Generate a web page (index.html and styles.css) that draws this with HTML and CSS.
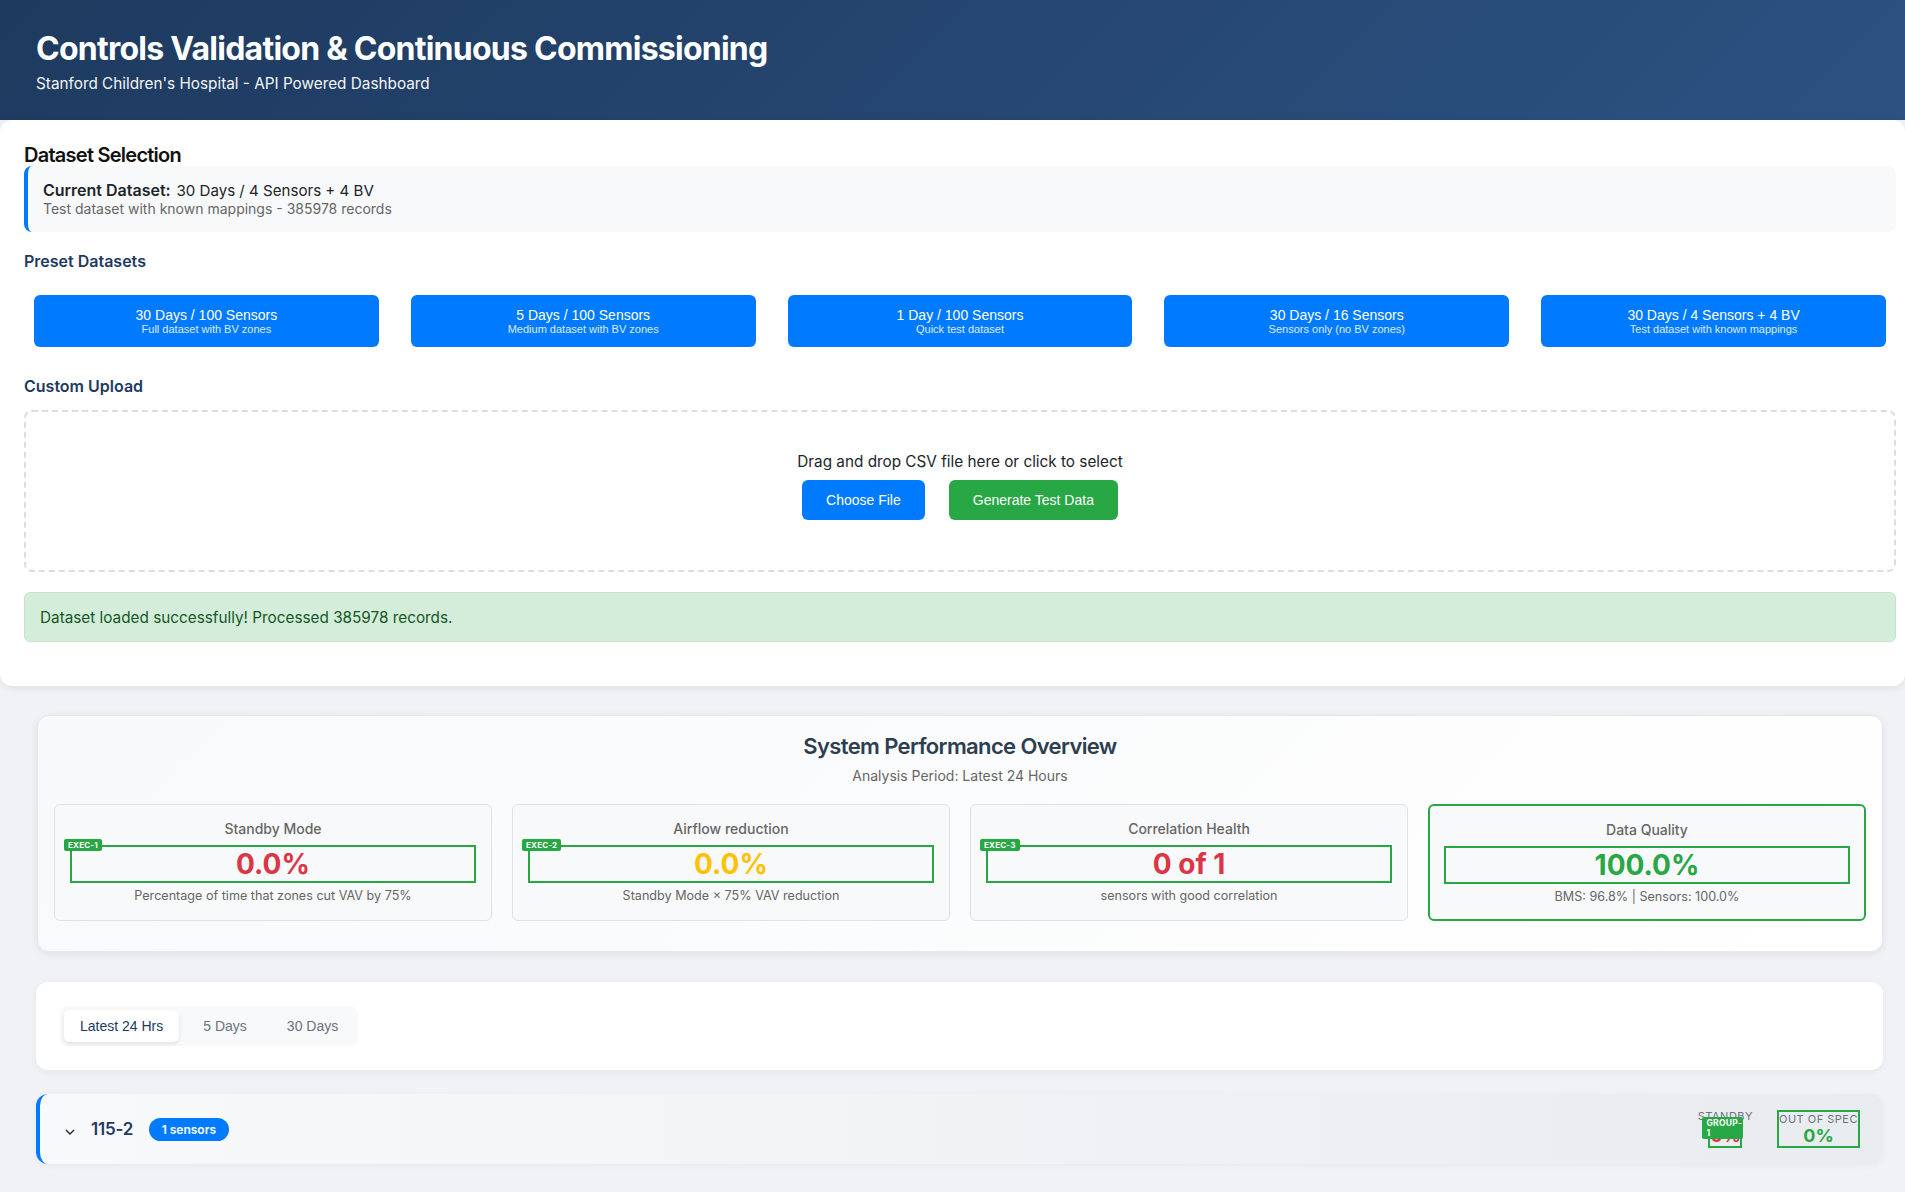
FILE: index.html
```html
<!DOCTYPE html>
<html lang="en">
<head>
<meta charset="utf-8">
<title>Controls Validation &amp; Continuous Commissioning</title>
<link rel="stylesheet" href="styles.css">
</head>
<body>
<header class="hero">
  <h1>Controls Validation &amp; Continuous Commissioning</h1>
  <p>Stanford Children's Hospital - API Powered Dashboard</p>
</header>
<section class="dataset">
  <h2>Dataset Selection</h2>
  <div class="current">
    <div class="current-name"><strong>Current Dataset:</strong> 30 Days / 4 Sensors + 4 BV</div>
    <div class="current-desc">Test dataset with known mappings - 385978 records</div>
  </div>
  <h3 class="label preset-label">Preset Datasets</h3>
  <div class="presets">
    <button class="preset"><span class="preset-name">30 Days / 100 Sensors</span><span class="preset-desc">Full dataset with BV zones</span></button>
    <button class="preset"><span class="preset-name">5 Days / 100 Sensors</span><span class="preset-desc">Medium dataset with BV zones</span></button>
    <button class="preset"><span class="preset-name">1 Day / 100 Sensors</span><span class="preset-desc">Quick test dataset</span></button>
    <button class="preset"><span class="preset-name">30 Days / 16 Sensors</span><span class="preset-desc">Sensors only (no BV zones)</span></button>
    <button class="preset"><span class="preset-name">30 Days / 4 Sensors + 4 BV</span><span class="preset-desc">Test dataset with known mappings</span></button>
  </div>
  <h3 class="label upload-label">Custom Upload</h3>
  <div class="dropzone">
    <p>Drag and drop CSV file here or click to select</p>
    <div class="drop-actions">
      <button class="btn btn-blue">Choose File</button>
      <button class="btn btn-green">Generate Test Data</button>
    </div>
  </div>
  <div class="alert">Dataset loaded successfully! Processed 385978 records.</div>
</section>
<main class="content">
  <section class="overview">
    <h2>System Performance Overview</h2>
    <p class="period">Analysis Period: Latest 24 Hours</p>
    <div class="metrics">
      <div class="metric">
        <div class="metric-title">Standby Mode</div>
        <div class="metric-value red"><span class="tag">EXEC-1</span>0.0%</div>
        <div class="metric-desc">Percentage of time that zones cut VAV by 75%</div>
      </div>
      <div class="metric">
        <div class="metric-title">Airflow reduction</div>
        <div class="metric-value amber"><span class="tag">EXEC-2</span>0.0%</div>
        <div class="metric-desc">Standby Mode × 75% VAV reduction</div>
      </div>
      <div class="metric">
        <div class="metric-title">Correlation Health</div>
        <div class="metric-value red"><span class="tag">EXEC-3</span>0 of 1</div>
        <div class="metric-desc">sensors with good correlation</div>
      </div>
      <div class="metric metric-good">
        <div class="metric-title">Data Quality</div>
        <div class="metric-value green">100.0%</div>
        <div class="metric-desc">BMS: 96.8% | Sensors: 100.0%</div>
      </div>
    </div>
  </section>
  <section class="tabs-card">
    <div class="tabs">
      <span class="tab tab-active">Latest 24 Hrs</span>
      <span class="tab">5 Days</span>
      <span class="tab">30 Days</span>
    </div>
  </section>
  <section class="group">
    <div class="group-left">
      <svg class="chevron" width="10" height="6" viewBox="0 0 10 6"><path d="M1 1l4 4 4-4" fill="none" stroke="#1f2937" stroke-width="1.4"/></svg>
      <span class="group-name">115-2</span>
      <span class="pill">1 sensors</span>
    </div>
    <div class="group-stats">
      <div class="stat">
        <div class="stat-label">STANDBY</div>
        <div class="stat-value red boxed"><span class="tag tag-group">GROUP-1</span>0%</div>
      </div>
      <div class="stat boxed">
        <div class="stat-label">OUT OF SPEC</div>
        <div class="stat-value green">0%</div>
      </div>
    </div>
  </section>
</main>
</body>
</html>
```
FILE: styles.css
```css
* { box-sizing: border-box; }
html, body { margin: 0; padding: 0; }
body {
  background: #f0f2f5;
  font-family: Inter, "Liberation Sans", sans-serif;
  color: #212529;
  height: 1192px;
  overflow: hidden;
}
h1, h2, h3, p { margin: 0; }
button { font: inherit; border: 0; cursor: pointer; }

.hero {
  height: 120px;
  padding: 30px 36px 0;
  color: #fff;
  background: linear-gradient(135deg, #1e3a5f 0%, #2c5282 100%);
}
.hero h1 { font-size: 32px; line-height: 38px; font-weight: 700; letter-spacing: -0.75px; }
.hero p { font-size: 15.3px; line-height: 19px; margin-top: 6px; opacity: .95; }

.dataset {
  height: 566px;
  padding: 25px 9px 0 24px;
  background: #fff;
  border-radius: 12px;
  box-shadow: 0 2px 8px rgba(0,0,0,.08);
}
.dataset h2 { font-size: 20px; line-height: 21px; font-weight: 600; color: #111; letter-spacing: -.75px; }
.current {
  height: 66px;
  padding: 15px;
  background: #f8f9fa;
  border-left: 4px solid #007bff;
  border-radius: 8px;
}
.current-name { font-size: 15.1px; line-height: 19px; }
.current-name strong { font-size: 16px; font-weight: 600; margin-right: 1.5px; }
.current-desc { font-size: 14px; line-height: 17px; color: #666; }
.label { font-size: 16px; line-height: 19px; font-weight: 600; color: #1e3a5f; }
.preset-label { margin-top: 20px; }
.upload-label { margin-top: 30px; }
.presets {
  display: grid;
  grid-template-columns: repeat(5, 1fr);
  gap: 32px;
  padding: 24px 10px 0;
}
.preset {
  height: 52px;
  display: flex;
  flex-direction: column;
  align-items: center;
  justify-content: center;
  color: #fff;
  font-family: "Liberation Sans", sans-serif;
  background: #007bff;
  border-radius: 6px;
}
.preset-name { font-size: 14px; line-height: 16px; }
.preset-desc { font-size: 11px; line-height: 13px; opacity: .85; }
.dropzone {
  height: 162px;
  margin-top: 14px;
  padding-top: 40px;
  text-align: center;
  border: 2px dashed #dddddd;
  border-radius: 8px;
}
.dropzone p { font-size: 15.3px; line-height: 19px; }
.drop-actions { display: flex; justify-content: center; gap: 24px; margin-top: 9px; }
.btn {
  height: 40px;
  padding: 0 24px;
  color: #fff;
  font-size: 14px;
  font-family: "Liberation Sans", sans-serif;
  border-radius: 6px;
}
.btn-blue { background: #007bff; }
.btn-green { background: #28a745; }
.alert {
  height: 50px;
  margin-top: 20px;
  padding: 0 15px;
  font-size: 15.3px;
  line-height: 49px;
  color: #155724;
  background: #d4edda;
  border: 1px solid #c3e6cb;
  border-radius: 6px;
}

.content { padding: 29px 22px 0 37px; }
.overview {
  height: 237px;
  padding: 17px 16px 0;
  text-align: center;
  background: linear-gradient(135deg, #f8f9fb 0%, #ffffff 100%);
  border: 1px solid #e5e7eb;
  border-radius: 12px;
  box-shadow: 0 2px 8px rgba(0,0,0,.08);
}
.overview h2 { font-size: 22px; line-height: 26px; font-weight: 600; color: #2c3e50; letter-spacing: -.63px; }
.period { margin-top: 8px; font-size: 14px; line-height: 17px; color: #666; }
.metrics { display: grid; grid-template-columns: repeat(4, 1fr); gap: 20px; margin-top: 20px; }
.metric {
  height: 117px;
  padding: 15px 15px 0;
  background: #f8f9fa;
  border: 1px solid #dee2e6;
  border-radius: 6px;
}
.metric-good { border: 2px solid #28a745; padding: 15px 14px 0; }
.metric-title { font-size: 14px; line-height: 17px; font-weight: 500; color: #666; margin-bottom: 8px; }
.metric-value {
  position: relative;
  height: 38px;
  font-size: 28px;
  line-height: 35px;
  font-weight: 700;
  border: 2px solid #28a745;
}
.metric-desc { margin-top: 5px; font-size: 12.6px; line-height: 16px; color: #666; }
.red { color: #dc3545; }
.amber { color: #ffc107; }
.green { color: #28a745; }
.tag {
  position: absolute;
  top: -8px;
  left: -8px;
  padding: 1px 4px;
  font-size: 8px;
  line-height: 10px;
  font-weight: 700;
  letter-spacing: .2px;
  color: #fff;
  background: #28a745;
  border-radius: 2px;
}

.tabs-card {
  height: 88px;
  margin: 30px 0 0 -1px;
  padding: 24px;
  background: #fff;
  border-radius: 12px;
  box-shadow: 0 2px 8px rgba(0,0,0,.05);
}
.tabs {
  display: inline-flex;
  gap: 8px;
  padding: 4px;
  background: #f8f9fa;
  border-radius: 8px;
}
.tab {
  padding: 8px 16px;
  font-family: "Liberation Sans", sans-serif;
  font-size: 14px;
  line-height: 16px;
  color: #6b7280;
  border-radius: 6px;
}
.tab-active { color: #1e3a5f; background: #fff; box-shadow: 0 2px 4px rgba(0,0,0,.1); }

.group {
  height: 70px;
  margin: 24px 0 0 -1px;
  padding: 0 23px 0 24px;
  display: flex;
  align-items: center;
  justify-content: space-between;
  background: linear-gradient(90deg, #f8f9fa 0%, #e9ecef 100%);
  border-left: 4px solid #007bff;
  border-radius: 12px;
  box-shadow: 0 2px 8px rgba(0,0,0,.04);
}
.group-left { display: flex; align-items: center; }
.chevron { margin: 6px 16px 0 1px; }
.group-name { font-size: 17px; font-weight: 600; color: #1e3a5f; letter-spacing: -.2px; }
.pill {
  margin-left: 16px;
  padding: 4px 12.5px;
  font-size: 12px;
  line-height: 15px;
  font-weight: 600;
  color: #fff;
  background: #007bff;
  border-radius: 12px;
}
.group-stats { display: flex; align-items: flex-end; gap: 24px; margin-bottom: 1px; }
.stat { display: flex; flex-direction: column; align-items: center; }
.stat.boxed { border: 2px solid #28a745; width: 83px; padding-top: 1px; }
.stat-label { font-size: 11px; line-height: 13px; letter-spacing: .5px; color: #6b7280; white-space: nowrap; }
.stat-value { font-size: 18px; line-height: 20px; font-weight: 700; }
.stat-value.boxed { position: relative; border: 2px solid #28a745; width: 34px; line-height: 21px; text-align: center; }
.tag-group {
  top: -8px;
  left: -8px;
  width: 41px;
  padding: 1px 4px;
  font-size: 8.5px;
  line-height: 10px;
  letter-spacing: .3px;
  text-align: left;
}
```
